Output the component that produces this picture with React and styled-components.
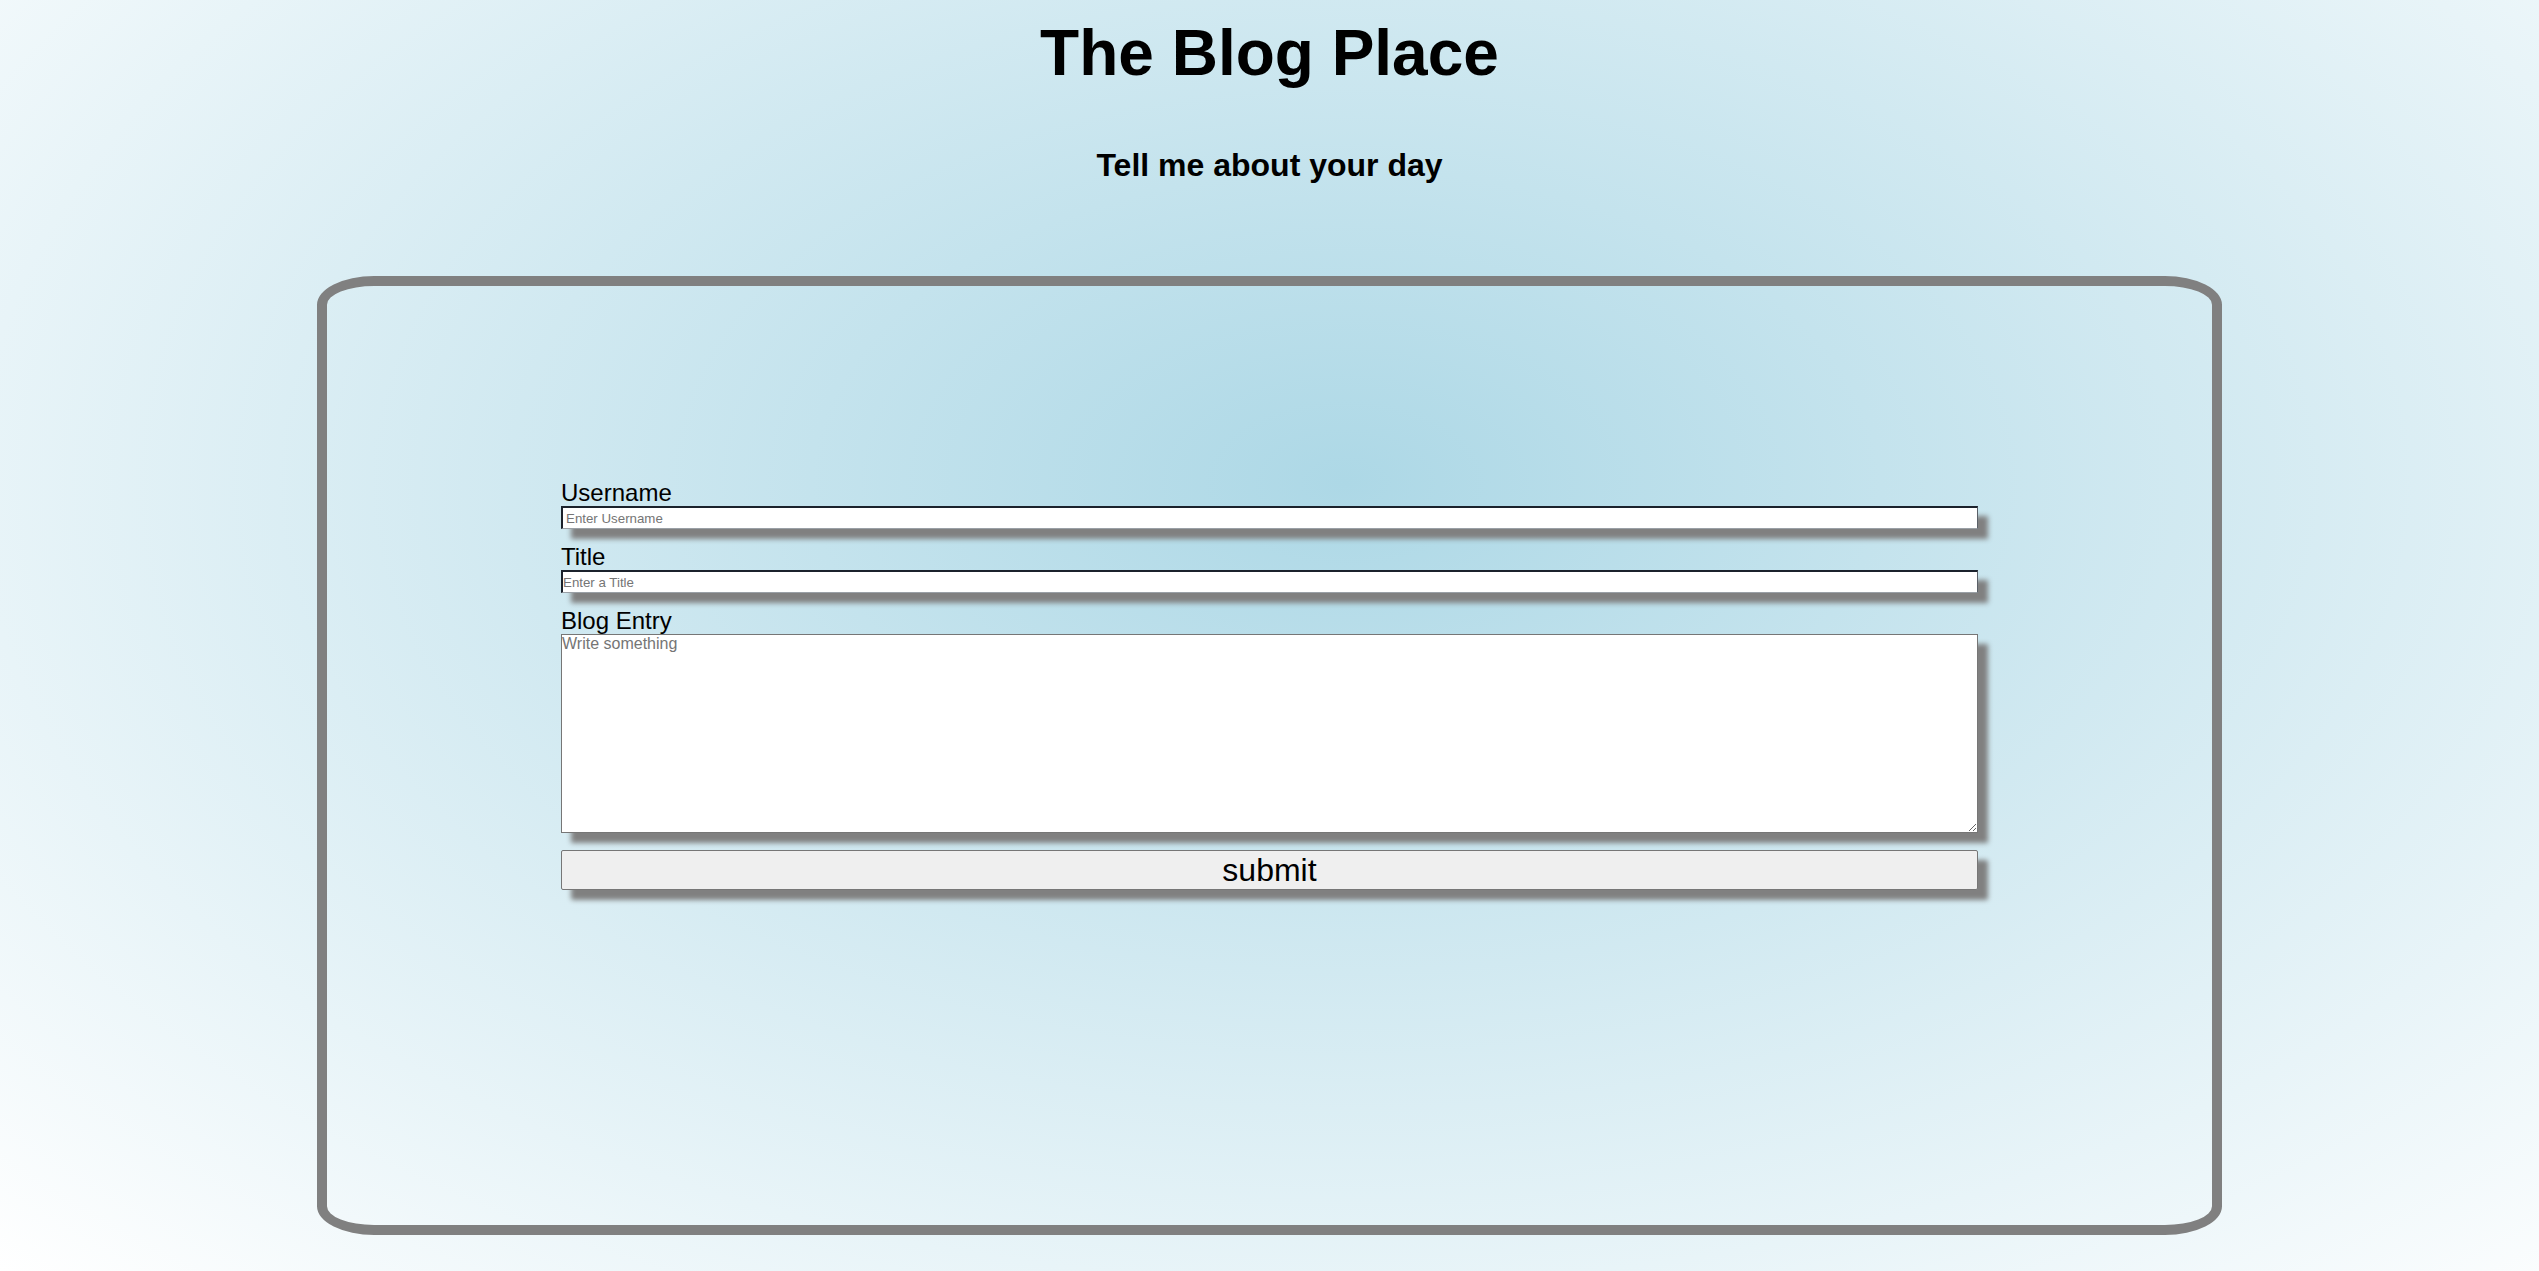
import React from "react";
import styled, { createGlobalStyle } from "styled-components";

const GlobalStyle = createGlobalStyle`
  html, body {
    margin: 0;
    padding: 0;
    min-height: 100%;
  }
  body {
    min-height: 1271px;
    font-family: "Liberation Sans", Arial, sans-serif;
    background: radial-gradient(ellipse farthest-corner at 53% 38%, #add8e6 0%, #ffffff 100%);
  }
`;

const Page = styled.div`
  display: flex;
  flex-direction: column;
  align-items: center;
  padding-top: 17px;
`;

const Title = styled.h1`
  margin: 0;
  font-size: 64px;
  line-height: 72px;
  font-weight: bold;
  color: #000;
`;

const Subtitle = styled.h3`
  margin: 58px 0 0;
  font-size: 32px;
  line-height: 36px;
  font-weight: bold;
  color: #000;
`;

const Card = styled.div`
  box-sizing: border-box;
  margin-top: 93px;
  width: 75%;
  height: 959px;
  padding-top: 194px;
  border: 10px solid grey;
  border-radius: 3%;
  display: flex;
  justify-content: center;
`;

const Form = styled.form`
  width: 75.2%;
  display: flex;
  flex-direction: column;
`;

const Label = styled.label`
  font-size: 24px;
  line-height: 26px;
  color: #000;
`;

const TextInput = styled.input`
  box-sizing: border-box;
  width: 100%;
  height: ${(p) => p.$h || 23}px;
  margin: 0 0 15px;
  padding: 0 0 0 ${(p) => p.$pad || 0}px;
  font-family: "Liberation Sans", Arial, sans-serif;
  font-size: 13.3px;
  background: #fff;
  border-style: solid;
  border-width: 2px 1px 1px 2px;
  border-color: #1b222c #5a6068 #9aa0a6 #1b222c;
  box-shadow: 10px 10px 5px grey;
  outline: none;

  &::placeholder {
    color: #757575;
  }
`;

const TextArea = styled.textarea`
  box-sizing: border-box;
  width: 100%;
  height: 199px;
  margin: 0 0 17px;
  padding: 0;
  font-family: "Liberation Sans", Arial, sans-serif;
  font-size: 16px;
  background: #fff;
  border: 1px solid #767676;
  box-shadow: 10px 10px 5px grey;
  resize: vertical;
  outline: none;

  &::placeholder {
    color: #757575;
  }
`;

const Submit = styled.button`
  box-sizing: border-box;
  width: 100%;
  height: 40px;
  padding: 0 6px;
  font-family: "Liberation Sans", Arial, sans-serif;
  font-size: 32px;
  line-height: 36px;
  color: #000;
  background: #efefef;
  border: 1px solid #767676;
  border-radius: 2px;
  box-shadow: 10px 10px 5px grey;
  cursor: pointer;
`;

export default function App() {
  return (
    <>
      <GlobalStyle />
      <Page>
        <Title>The Blog Place</Title>
        <Subtitle>Tell me about your day</Subtitle>
        <Card>
          <Form onSubmit={(e) => e.preventDefault()}>
            <Label htmlFor="username">Username</Label>
            <TextInput id="username" type="text" placeholder="Enter Username" $pad={3} />
            <Label htmlFor="title">Title</Label>
            <TextInput id="title" type="text" placeholder="Enter a Title" />
            <Label htmlFor="entry">Blog Entry</Label>
            <TextArea id="entry" placeholder="Write something" />
            <Submit type="submit">submit</Submit>
          </Form>
        </Card>
      </Page>
    </>
  );
}
